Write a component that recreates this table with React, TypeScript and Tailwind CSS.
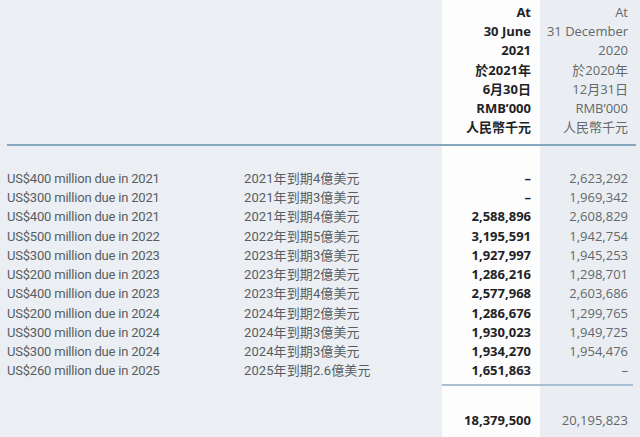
const rows: [string, string, string, string][] = [
  ["US$400 million due in 2021", "2021年到期4億美元", "–", "2,623,292"],
  ["US$300 million due in 2021", "2021年到期3億美元", "–", "1,969,342"],
  ["US$400 million due in 2021", "2021年到期4億美元", "2,588,896", "2,608,829"],
  ["US$500 million due in 2022", "2022年到期5億美元", "3,195,591", "1,942,754"],
  ["US$300 million due in 2023", "2023年到期3億美元", "1,927,997", "1,945,253"],
  ["US$200 million due in 2023", "2023年到期2億美元", "1,286,216", "1,298,701"],
  ["US$400 million due in 2023", "2023年到期4億美元", "2,577,968", "2,603,686"],
  ["US$200 million due in 2024", "2024年到期2億美元", "1,286,676", "1,299,765"],
  ["US$300 million due in 2024", "2024年到期3億美元", "1,930,023", "1,949,725"],
  ["US$300 million due in 2024", "2024年到期3億美元", "1,934,270", "1,954,476"],
  ["US$260 million due in 2025", "2025年到期2.6億美元", "1,651,863", "–"],
];

const header: [string, string][] = [
  ["At", "At"],
  ["30 June", "31 December"],
  ["2021", "2020"],
  ["於2021年", "於2020年"],
  ["6月30日", "12月31日"],
  ["RMB’000", "RMB’000"],
  ["人民幣千元", "人民幣千元"],
];

const font = { fontFamily: '"Open Sans", "Noto Sans CJK TC", sans-serif' };
const narrow = { fontFamily: 'Roboto, "Noto Sans CJK TC", sans-serif' };

function Row({ h, a, b, c, d }: { h: string; a?: React.ReactNode; b?: React.ReactNode; c?: React.ReactNode; d?: React.ReactNode }) {
  return (
    <div className={`flex ${h}`}>
      <div className="w-[236px] bg-[#ebeff3] pl-[7px] text-[#585d62] text-[13px] tracking-[-0.2px] flex items-center" style={narrow}>{a}</div>
      <div className="w-[206px] bg-[#ebeff3] pl-[8px] text-[#585d62] text-[13px] flex items-center tracking-[0.1px]" style={narrow}>{b}</div>
      <div className="w-[98px] bg-[#fdfdfd] pr-[9px] text-[#1f2326] font-bold flex items-center justify-end">{c}</div>
      <div className="w-[100px] bg-[#eaeef2] pr-[12px] text-[#63686c] flex items-center justify-end">{d}</div>
    </div>
  );
}

export default function App() {
  return (
    <div className="w-[640px] h-[437px] overflow-hidden bg-[#ebeff3] text-[13px] leading-none" style={font}>
      <Row h="h-[3px]" />
      {header.map(([l, r], i) => (
        <Row key={i} h="h-[19.2px]" c={l} d={r} />
      ))}
      <Row h="h-[7px]" />
      <div className="flex h-[2px]">
        <div className="w-[236px] bg-[#ebeff3] pl-[7px]"><div className="h-full bg-[#86a8bf]" /></div>
        <div className="w-[206px] bg-[#86a8bf]" />
        <div className="w-[98px] bg-[#86a8bf]" />
        <div className="w-[100px] bg-[#eaeef2] pr-[4px]"><div className="h-full bg-[#86a8bf]" /></div>
      </div>
      <Row h="h-[22.4px]" />
      {rows.map(([a, b, c, d], i) => (
        <Row key={i} h="h-[19.25px]" a={a} b={b} c={c} d={d} />
      ))}
      <Row h="h-[4px]" />
      <div className="flex h-[2px]">
        <div className="w-[442px] bg-[#ebeff3]" />
        <div className="w-[98px] bg-[#a9c2d3]" />
        <div className="w-[100px] bg-[#eaeef2] pr-[7px]"><div className="h-full bg-[#a9c2d3]" /></div>
      </div>
      <Row h="h-[24px]" />
      <Row h="h-[19.2px]" c="18,379,500" d="20,195,823" />
      <Row h="h-[30px]" />
    </div>
  );
}
